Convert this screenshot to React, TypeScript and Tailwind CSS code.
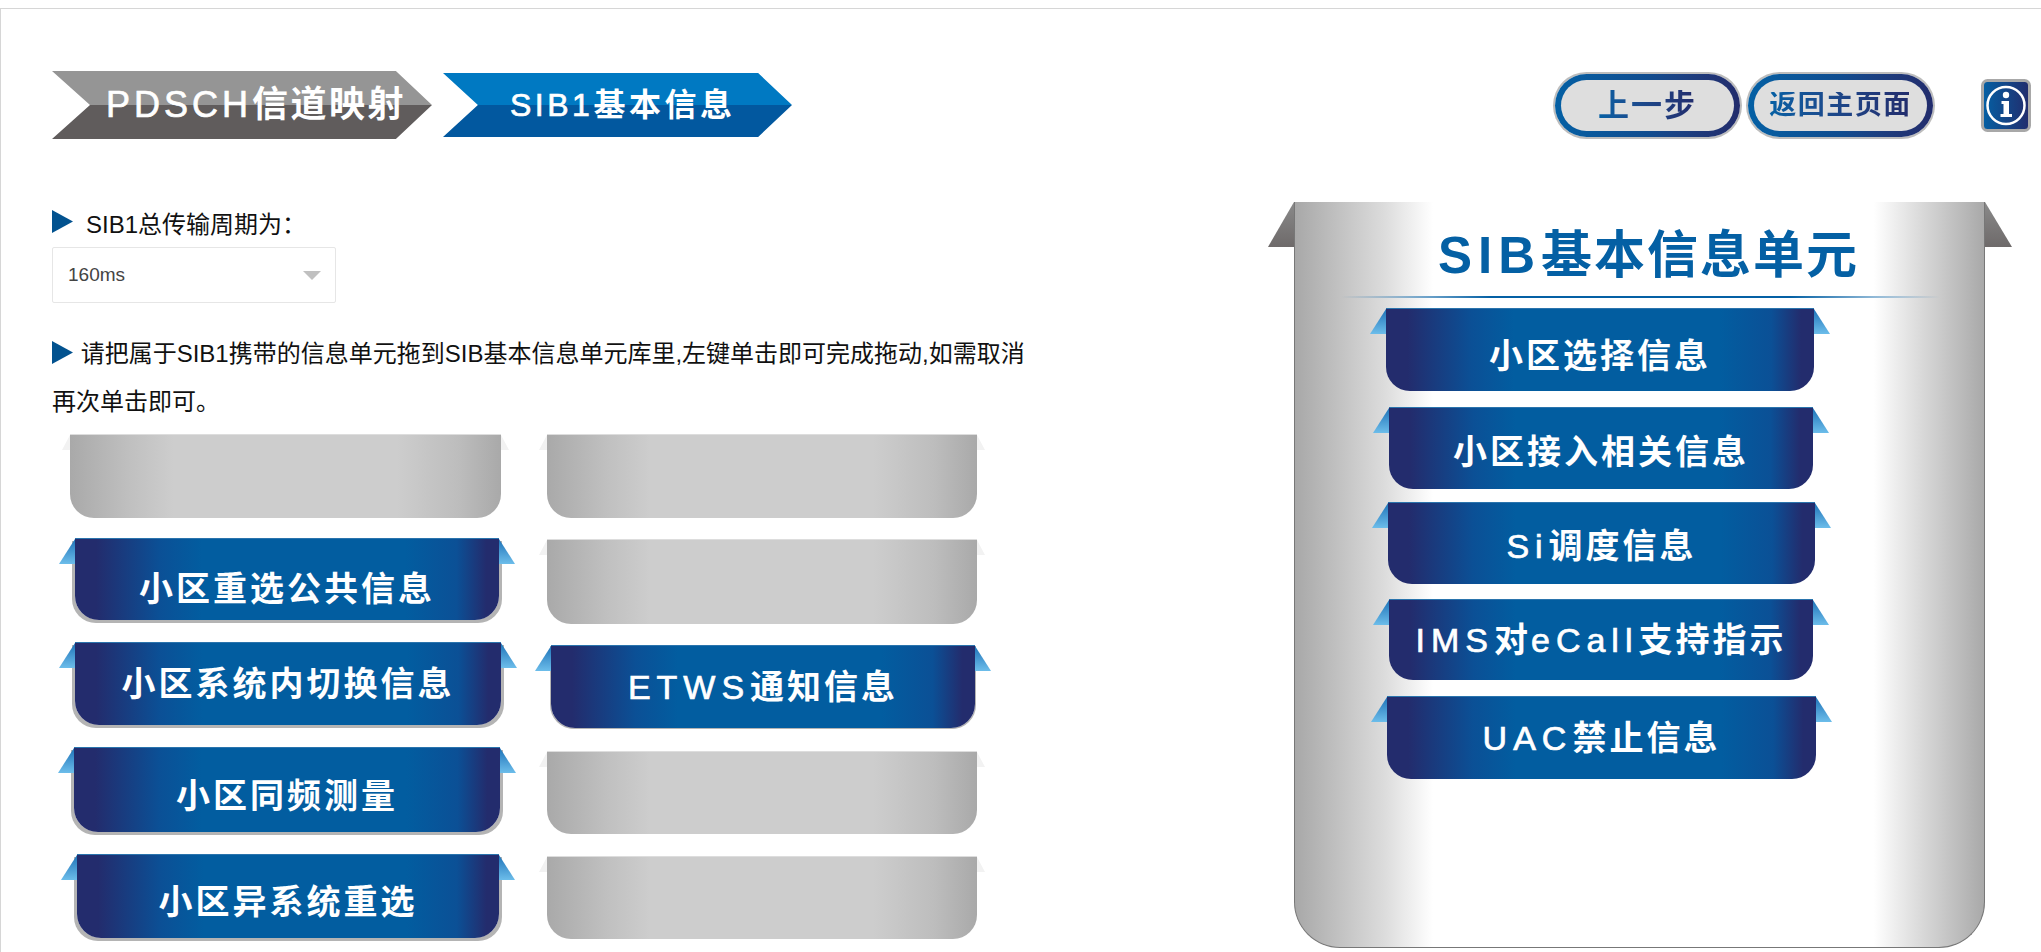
import type { ReactNode } from "react";

const triLeft = "[clip-path:polygon(100%_0,100%_100%,0_100%)]";
const triRight = "[clip-path:polygon(0_0,100%_100%,0_100%)]";
const latinStroke = "font-normal [-webkit-text-stroke:0.7px_#ffffff]";

// latin letters in the images are thinner and more spaced out than the chinese
function Latin({ children }: { children: ReactNode }) {
  return <span className={`tracking-[6px] ${latinStroke}`}>{children}</span>;
}

// one blue or grey "ribbon" card, the two little triangles sit on its top corners
function Card({
  label,
  className,
  textClass = "",
  grey = false,
  shadow = false,
}: {
  label?: ReactNode;
  className: string;
  textClass?: string;
  grey?: boolean;
  shadow?: boolean;
}) {
  const body = grey
    ? "bg-[linear-gradient(90deg,#a9a9a9,#c0c0c0_14%,#cdcdcd_24%,#cdcdcd_76%,#bdbdbd_90%,#a9a9a9)] border-t border-[#dddddd]"
    : "bg-[linear-gradient(90deg,#232c6d,#232c6d_5%,#0b5096_20%,#025da0_30%,#025da0_78%,#0b5096_90%,#232c6d_97%)] border-t border-[#2a74ad]";
  return (
    <div
      className={`relative rounded-b-[24px] flex items-center justify-center ${body} ${
        shadow ? "shadow-[-3px_3px_0_#b4b4b4,3px_3px_0_#b4b4b4]" : ""
      } ${className}`}
    >
      {grey ? (
        <>
          <div className={`absolute left-[-8px] top-0 w-[8px] h-[15px] bg-[#f2f2f2] ${triLeft}`}></div>
          <div className={`absolute right-[-8px] top-0 w-[8px] h-[15px] bg-[#f2f2f2] ${triRight}`}></div>
        </>
      ) : (
        <>
          <div className={`absolute left-[-16px] top-0 w-[16px] h-[25px] bg-gradient-to-b from-[#1a73b8] to-[#6cbdea] ${triLeft}`}></div>
          <div className={`absolute right-[-16px] top-0 w-[16px] h-[25px] bg-gradient-to-b from-[#1a73b8] to-[#6cbdea] ${triRight}`}></div>
        </>
      )}
      {label && (
        <span className={`text-white font-bold text-[34px] tracking-[3px] leading-none whitespace-nowrap ${textClass}`}>
          {label}
        </span>
      )}
    </div>
  );
}

function Marker({ className = "" }: { className?: string }) {
  return (
    <svg className={`inline-block w-[21px] h-[23px] shrink-0 ${className}`} viewBox="0 0 21 23">
      <polygon points="0,0 21,11.5 0,23" fill="#02528f" />
    </svg>
  );
}

function PillButton({ label, className }: { label: string; className: string }) {
  return (
    <div className="w-[185px] h-[63px] p-[6px] rounded-full bg-gradient-to-r from-[#0460a4] via-[#0f4c8f] to-[#222c6c] shadow-[0_0_0_2px_#bdbdbd]">
      <div className="w-full h-full rounded-full bg-[#dedede] flex items-center justify-center">
        <span className={`font-bold leading-none whitespace-nowrap bg-gradient-to-r from-[#0460a4] to-[#222c6c] bg-clip-text text-transparent ${className}`}>
          {label}
        </span>
      </div>
    </div>
  );
}

export default function App() {
  return (
    <div className="mt-[8px] h-[944px] overflow-hidden border-t border-l border-[#d6d6d6] bg-white text-[#111111] [font-family:'Liberation_Sans','Noto_Sans_CJK_SC',sans-serif]">
      {/* top row */}
      <div className="h-[193px] pt-[62px] pl-[51px] pr-[10px]">
        <div className="h-[68px] flex items-center">
          <div className="w-[380px] h-[68px] pl-[54px] flex items-center bg-[linear-gradient(180deg,#959595_50%,#605c5c_50%)] [clip-path:polygon(0_0,90.5%_0,100%_50%,90.5%_100%,0_100%,10%_50%)]">
            <span className="text-white font-bold text-[36px] tracking-[2.5px] leading-none whitespace-nowrap">
              <span className={`tracking-[4px] ${latinStroke}`}>PDSCH</span>信道映射
            </span>
          </div>
          <div className="ml-[11px] w-[349px] h-[64px] pl-[67px] flex items-center bg-[linear-gradient(180deg,#0079c2_50%,#02589f_50%)] [clip-path:polygon(0_0,90.3%_0,100%_50%,90.3%_100%,0_100%,10%_50%)]">
            <span className="text-white font-bold text-[32px] tracking-[3.5px] leading-none whitespace-nowrap">
              <span className={latinStroke}>SIB1</span>基本信息
            </span>
          </div>
          <div className="ml-auto flex items-center gap-[8px]">
            <PillButton label="上一步" className="text-[31px] tracking-[2px]" />
            <PillButton label="返回主页面" className="text-[27px] tracking-[1.5px]" />
          </div>
          <svg className="ml-[48px] w-[50px] h-[53px]" viewBox="0 0 50 53">
            <defs>
              <linearGradient id="infoBg" x1="0" x2="1" y1="0" y2="0">
                <stop offset="0" stopColor="#0460a4" />
                <stop offset="1" stopColor="#222c6c" />
              </linearGradient>
            </defs>
            <rect x="1.5" y="1.5" width="47" height="50" rx="5" fill="url(#infoBg)" stroke="#a8a8a8" strokeWidth="3" />
            <circle cx="25" cy="26.5" r="18.5" fill="none" stroke="#ffffff" strokeWidth="2.5" />
            <circle cx="25" cy="16" r="3.2" fill="#ffffff" />
            <path d="M20.5 22h7.5v13h3v3H19.5v-3h3V25h-2z" fill="#ffffff" />
          </svg>
        </div>
      </div>

      <div className="flex pl-[51px]">
        {/* left side */}
        <div className="w-[1242px] shrink-0">
          <div className="h-[46px] flex items-center text-[24px]">
            <Marker className="-translate-y-[4px]" />
            <span className="ml-[13px] whitespace-nowrap">SIB1总传输周期为：</span>
          </div>
          <div className="-mt-px w-[284px] h-[56px] border border-[#e6e6e6] rounded-[2px] pl-[15px] pr-[14px] flex items-center justify-between">
            <span className="text-[19px] text-[#444444]">160ms</span>
            <span className="w-0 h-0 border-x-[9px] border-x-transparent border-t-[9px] border-t-[#c0c0c0]"></span>
          </div>
          <p className="mt-[27px] w-[990px] text-[24px] leading-[48px]">
            <Marker className="-translate-y-[3px]" /> <span className="ml-[1px]">请把属于SIB1携带的信息单元拖到SIB基本信息单元库里,左键单击即可完成拖动,如需取消再次单击即可。</span>
          </p>

          <div className="mt-[8px] flex">
            <div className="w-[495px] shrink-0">
              <Card grey className="ml-[18px] w-[431px] h-[84px]" />
              <Card shadow label="小区重选公共信息" textClass="mt-[18px]" className="mt-[20px] ml-[23px] w-[424px] h-[82px]" />
              <Card shadow label="小区系统内切换信息" className="mt-[22px] ml-[23px] w-[426px] h-[83px]" />
              <Card shadow label="小区同频测量" textClass="mt-[12px]" className="mt-[22px] ml-[22px] w-[426px] h-[85px]" />
              <Card shadow label="小区异系统重选" textClass="mt-[10px]" className="mt-[22px] ml-[25px] w-[422px] h-[84px]" />
            </div>
            <div className="w-[430px] shrink-0">
              <Card grey className="w-[430px] h-[84px]" />
              <Card grey className="mt-[21px] w-[430px] h-[85px]" />
              <Card label={<><Latin>ETWS</Latin>通知信息</>} className="mt-[21px] ml-[4px] w-[424px] h-[83px] shadow-[-1px_1px_0_#b4b4b4,1px_1px_0_#b4b4b4]" />
              <Card grey className="mt-[23px] w-[430px] h-[83px]" />
              <Card grey className="mt-[22px] w-[430px] h-[83px]" />
            </div>
          </div>
        </div>

        {/* right side, the SIB library */}
        <div className="relative w-[691px] h-[746px] shrink-0 rounded-b-[46px] border-x border-b border-[#777777] bg-[linear-gradient(90deg,#a8a8a8,#c4c4c4_7%,#dcdcdc_13%,#ffffff_20%,#ffffff_84%,#dedede_90%,#a9a9a9)]">
          <div className="absolute left-[-27px] top-0 w-[26px] h-[45px] bg-gradient-to-b from-[#8a8a8a] to-[#6e6a6a] [clip-path:polygon(100%_0,100%_100%,0_100%)]"></div>
          <div className="absolute right-[-28px] top-0 w-[27px] h-[45px] bg-gradient-to-b from-[#8a8a8a] to-[#6e6a6a] [clip-path:polygon(0_0,100%_100%,0_100%)]"></div>

          <div className="h-[94px] pt-[13px] pl-[143px] flex items-center">
            <span className="text-[51px] font-bold tracking-[2px] text-[#0460a4] leading-none whitespace-nowrap">
              <span className="tracking-[6px]">SIB</span>基本信息单元
            </span>
          </div>
          <div className="ml-[46px] w-[599px] h-[2px] bg-[linear-gradient(90deg,transparent,#0460a4_25%,#0460a4_75%,transparent)]"></div>

          <Card label="小区选择信息" textClass="mt-[12px]" className="mt-[10px] ml-[91px] w-[428px] h-[83px]" />
          <Card label="小区接入相关信息" textClass="mt-[7px]" className="mt-[16px] ml-[94px] w-[424px] h-[82px]" />
          <Card label={<><Latin>Si</Latin>调度信息</>} textClass="mt-[4px]" className="mt-[13px] ml-[93px] w-[427px] h-[82px]" />
          <Card label={<><Latin>IMS</Latin>对<Latin>eCall</Latin>支持指示</>} className="mt-[15px] ml-[94px] w-[424px] h-[81px]" />
          <Card label={<><Latin>UAC</Latin>禁止信息</>} className="mt-[16px] ml-[92px] w-[429px] h-[83px]" />
        </div>
      </div>
    </div>
  );
}
